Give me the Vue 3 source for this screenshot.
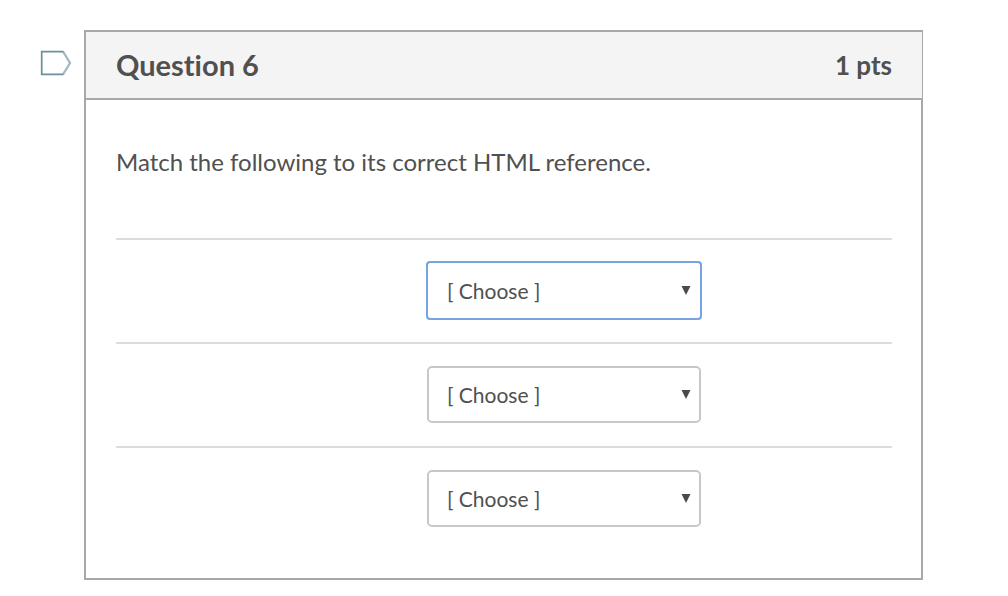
<script setup>
import { ref } from 'vue'

const answers = ref([
  { id: 1, value: '', active: true },
  { id: 2, value: '', active: false },
  { id: 3, value: '', active: false },
])
const flagged = ref(false)
</script>

<template>
  <main class="quiz">
    <button
      class="flag"
      type="button"
      aria-label="Flag question"
      :aria-pressed="flagged"
      @click="flagged = !flagged"
    >
      <svg width="32" height="26" viewBox="0 0 32 26" fill="none" aria-hidden="true">
        <path d="M23 1.5 L30 13 L23 24.5" stroke="#a3bbc6" stroke-width="2.4" />
        <path d="M23.5 1.7 H1.7 V24.3 H23.5" stroke="#6b8fa0" stroke-width="1.7" />
      </svg>
    </button>
    <section class="question">
      <header class="header">
        <h2 class="title">Question 6</h2>
        <span class="points">1 pts</span>
      </header>
      <div class="body">
        <p class="prompt">Match the following to its correct HTML reference.</p>
        <div v-for="answer in answers" :key="answer.id" class="row">
          <div class="picker">
            <select
              v-model="answer.value"
              class="select"
              :class="{ active: answer.active }"
              :aria-label="`Match ${answer.id}`"
            >
              <option value="">[ Choose ]</option>
            </select>
            <svg class="arrow" width="10" height="10" viewBox="0 0 10 10" aria-hidden="true">
              <path d="M0.5 1 H9.5 L5 10 Z" fill="#484a4c" />
            </svg>
          </div>
        </div>
      </div>
    </section>
  </main>
</template>

<style>
body {
  margin: 0;
  background: #fff;
}
</style>

<style scoped>
.quiz {
  display: flex;
  align-items: flex-start;
  gap: 12px;
  padding: 30px 85px 16px 40px;
  font-family: Lato, "Liberation Sans", sans-serif;
  font-variant-ligatures: none;
  color: #505050;
}
.flag {
  flex: none;
  display: block;
  margin: 20px 0 0;
  padding: 0;
  border: 0;
  background: none;
  cursor: pointer;
}
.flag svg {
  display: block;
}
.question {
  flex: 1;
  min-width: 0;
}
.header {
  display: flex;
  align-items: center;
  justify-content: space-between;
  padding: 15px 30px;
  border: 2px solid #a8a8a8;
  border-right-width: 1px;
  background: #f4f4f4;
}
.title,
.points {
  margin: 0;
  font-weight: 700;
  line-height: 36px;
}
.title {
  font-size: 29px;
}
.points {
  font-size: 26px;
}
.body {
  padding: 44px 29px 28px 30px;
  border: 2px solid #a8a8a8;
  border-top: 0;
}
.prompt {
  margin: 0 0 58px;
  font-size: 24px;
  line-height: 36px;
}
.row {
  display: grid;
  grid-template-columns: 2fr 3fr;
  gap: 1px;
  padding: 22px 0 23px;
  border-top: 2px solid #dcdcdc;
}
.picker {
  grid-column: 2;
  position: relative;
  width: 274px;
}
.select {
  display: block;
  appearance: none;
  box-sizing: border-box;
  width: 100%;
  height: 57px;
  margin: 0;
  padding: 0 40px 0 18px;
  border: 2px solid #c8c8c8;
  border-radius: 5px;
  background: #fff;
  color: #505050;
  font-family: inherit;
  font-size: 21px;
  line-height: 32px;
}
.select.active {
  border: 1px solid #a9bddc;
  padding-left: 19px;
  border-radius: 3px;
  outline: 2px solid #76a3e4;
  outline-offset: -1px;
}
.arrow {
  position: absolute;
  top: 23px;
  right: 10px;
  pointer-events: none;
}
</style>
